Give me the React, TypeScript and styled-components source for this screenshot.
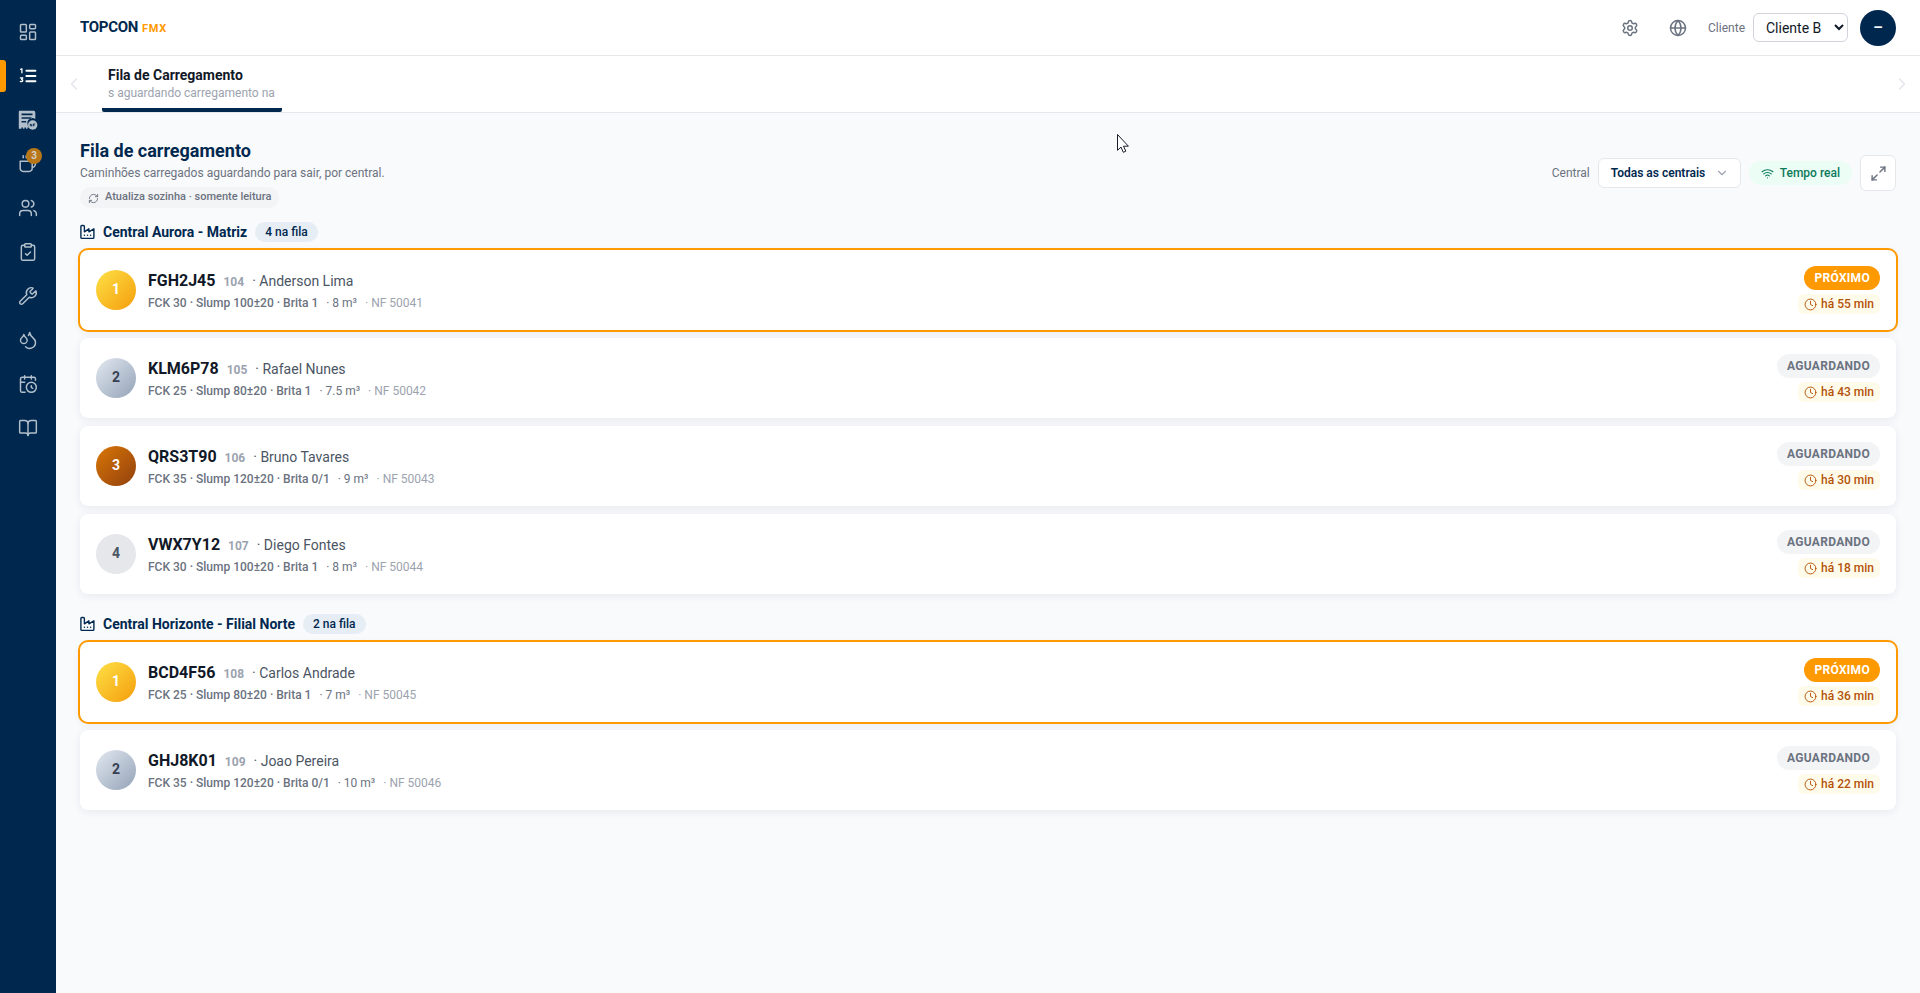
import React from 'react';

import styled, { createGlobalStyle, css } from 'styled-components';
import {
  BookOpen,
  CalendarClock,
  ChevronDown,
  ChevronLeft,
  ChevronRight,
  ClipboardCheck,
  Clock,
  Droplets,
  Globe,
  LayoutDashboard,
  Maximize2,
  RefreshCw,
  Settings,
  Users,
  Wifi,
  Wrench,
} from 'lucide-react';

const NAVY = '#00284f';
const ORANGE = '#ff9900';

const GlobalStyle = createGlobalStyle`
  * {
    box-sizing: border-box;
  }

  body {
    margin: 0;
    background: #f9fafc;
    color: #111827;
    font-family: Roboto, sans-serif;
    font-size: 14px;
  }

  button,
  select {
    font-family: inherit;
  }
`;

const Shell = styled.div`
  display: flex;
  height: 100vh;
  overflow: hidden;
`;

const Sidebar = styled.nav`
  display: flex;
  flex-direction: column;
  flex: 0 0 56px;
  padding-top: 10px;
  background: ${NAVY};
`;

const NavItem = styled.a<{ $active?: boolean }>`
  position: relative;
  display: flex;
  align-items: center;
  justify-content: center;
  height: 44px;
  color: ${({ $active }) => ($active ? '#ffffff' : '#b3bfca')};

  ${({ $active }) =>
    $active &&
    css`
      &::before {
        content: '';
        position: absolute;
        left: 0;
        top: 6px;
        width: 6px;
        height: 32px;
        border-radius: 0 3px 3px 0;
        background: ${ORANGE};
      }
    `}
`;

const NavBadge = styled.span`
  position: absolute;
  left: 26px;
  top: 6px;
  width: 16px;
  height: 16px;
  border-radius: 50%;
  background: #b87718;
  color: #d5d0c8;
  font-size: 10px;
  font-weight: 700;
  line-height: 16px;
  text-align: center;
`;

const Main = styled.div`
  flex: 1;
  min-width: 0;
`;

const TopBar = styled.header`
  display: flex;
  align-items: center;
  height: 56px;
  padding: 0 24px;
  border-bottom: 1px solid #e5e7eb;
  background: #ffffff;
`;

const Brand = styled.div`
  display: flex;
  align-items: baseline;
  gap: 4px;
  margin-right: auto;
  color: ${NAVY};
  font-size: 15px;
  font-weight: 700;
  letter-spacing: -0.3px;
  line-height: 20px;

  small {
    color: ${ORANGE};
    font-size: 11px;
    letter-spacing: 0.7px;
  }
`;

const TopIcon = styled.button`
  display: flex;
  align-items: center;
  justify-content: center;
  width: 48px;
  height: 36px;
  padding: 0;
  border: 0;
  background: none;
  color: #6b7280;
`;

const ClientLabel = styled.label`
  display: flex;
  align-items: center;
  gap: 8px;
  margin: 0 12px 0 6px;
  color: #6b7280;
  font-size: 12px;
`;

const ClientSelect = styled.select`
  width: 95px;
  height: 29px;
  padding: 0 0 0 8px;
  border: 1px solid #d1d5db;
  border-radius: 6px;
  background: #ffffff;
  color: #111827;
  font-size: 14px;
`;

const Avatar = styled.div`
  display: flex;
  align-items: center;
  justify-content: center;
  width: 36px;
  height: 36px;
  padding-bottom: 2px;
  border-radius: 50%;
  background: ${NAVY};
  color: #ffffff;
  font-size: 15px;
  font-weight: 700;
  line-height: 18px;
`;

const TabBar = styled.div`
  display: flex;
  align-items: center;
  height: 57px;
  padding: 0 8px;
  border-bottom: 1px solid #e5e7eb;
  background: #ffffff;
  color: #e5e7eb;
`;

const Tab = styled.div`
  align-self: stretch;
  width: 180px;
  margin: 0 auto 0 18px;
  padding: 10px 6px 0;
  border-bottom: 4px solid ${NAVY};
  border-radius: 0 0 2px 2px;
  color: #111827;
  font-size: 14px;
  font-weight: 700;
  line-height: 18px;
  white-space: nowrap;

  small {
    display: block;
    overflow: hidden;
    margin-top: 1px;
    color: #9ca3af;
    font-size: 12px;
    font-weight: 400;
    line-height: 16px;
  }
`;

const Content = styled.main`
  padding: 24px;
`;

const PageHeader = styled.div`
  display: flex;
  align-items: center;
  justify-content: space-between;
  height: 72px;
`;

const Heading = styled.div`
  display: flex;
  flex-direction: column;
  align-items: flex-start;
  align-self: flex-start;
`;

const PageTitle = styled.h1`
  margin: 0;
  color: ${NAVY};
  font-size: 18px;
  font-weight: 700;
  line-height: 28px;
`;

const Subtitle = styled.p`
  margin: 0;
  color: #6b7280;
  font-size: 12px;
  line-height: 16px;
`;

const ReadOnlyNote = styled.span`
  display: inline-flex;
  align-items: center;
  gap: 6px;
  height: 21px;
  margin-top: 6px;
  padding: 0 8px 2px;
  border-radius: 11px;
  background: #f3f4f6;
  color: #6b7280;
  font-size: 11px;
  font-weight: 500;
  line-height: 16px;

  svg {
    margin-top: 3px;
  }
`;

const Controls = styled.div`
  display: flex;
  align-items: center;
  gap: 8px;
  color: #6b7280;
  font-size: 12px;
`;

const PlantSelect = styled.button`
  display: flex;
  align-items: center;
  justify-content: space-between;
  width: 143px;
  height: 30px;
  padding: 0 11px 0 12px;
  border: 1px solid #e5e7eb;
  border-radius: 6px;
  background: #ffffff;
  color: ${NAVY};
  font-size: 12px;
  font-weight: 600;

  svg {
    color: #9ca3af;
  }
`;

const LivePill = styled.span`
  display: flex;
  align-items: center;
  gap: 6px;
  height: 24px;
  padding: 0 12px;
  border-radius: 12px;
  background: #ecfdf5;
  color: #0c7a5c;
  font-weight: 500;
`;

const ExpandButton = styled.button`
  display: flex;
  align-items: center;
  justify-content: center;
  width: 36px;
  height: 36px;
  padding: 0;
  border: 1px solid #e5e7eb;
  border-radius: 6px;
  background: #ffffff;
  color: #6b7280;
`;

const Plant = styled.section`
  margin-top: 11px;

  & + & {
    margin-top: 18px;
  }
`;

const PlantHeading = styled.h2`
  display: flex;
  align-items: center;
  height: 24px;
  margin: 0 0 6px;
  color: ${NAVY};
  font-size: 14px;
  font-weight: 700;
  line-height: 20px;

  svg {
    margin-right: 8px;
  }
`;

const CountPill = styled.span`
  height: 20px;
  margin-left: 8px;
  padding: 0 10px;
  border-radius: 10px;
  background: #e6edf5;
  font-size: 12px;
  font-weight: 500;
`;

const Queue = styled.div`
  display: grid;
  gap: 8px;
`;

const QueueCard = styled.article<{ $next?: boolean }>`
  display: flex;
  align-items: center;
  gap: 12px;
  height: 80px;
  padding: 0 16px;
  border-radius: 8px;
  background: #ffffff;
  box-shadow: ${({ $next }) => $next && `0 0 0 2px ${ORANGE}, `}
    0 2px 8px rgba(0, 40, 79, 0.08);
`;

const rankStyles: Record<number, ReturnType<typeof css>> = {
  1: css`
    background: linear-gradient(135deg, #fde047, #f59e0b);
    color: #ffffff;
  `,
  2: css`
    background: linear-gradient(135deg, #e2e8f0, #94a3b8);
    color: #374151;
  `,
  3: css`
    background: linear-gradient(135deg, #d97706, #92400e);
    color: #ffffff;
  `,
};

const Rank = styled.div<{ $rank: number }>`
  display: flex;
  align-items: center;
  justify-content: center;
  width: 40px;
  height: 40px;
  padding-bottom: 2px;
  border-radius: 50%;
  background: #e5e7eb;
  color: #4b5563;
  font-size: 14px;
  font-weight: 700;
  ${({ $rank }) => rankStyles[$rank]}
`;

const Details = styled.div`
  flex: 1;
`;

const TruckLine = styled.div`
  display: flex;
  align-items: baseline;
  gap: 8px;
  padding-top: 2px;
  color: #4b5563;
  font-size: 14px;
  line-height: 22px;
`;

const Plate = styled.strong`
  color: #111827;
  font-size: 16px;
  font-weight: 700;
`;

const Fleet = styled.span`
  color: #9ca3af;
  font-size: 12px;
  font-weight: 700;
`;

const MixLine = styled.div`
  display: flex;
  gap: 8px;
  color: #6b7280;
  font-size: 12px;
  line-height: 20px;
`;

const Mix = styled.span`
  font-weight: 500;
`;

const Invoice = styled.span`
  color: #9ca3af;
`;

const StatusColumn = styled.div`
  display: flex;
  flex-direction: column;
  align-items: flex-end;
  gap: 4px;
`;

const Status = styled.span<{ $next?: boolean }>`
  height: 24px;
  padding: 0 10px;
  border-radius: 12px;
  background: ${({ $next }) => ($next ? ORANGE : '#f3f4f6')};
  color: ${({ $next }) => ($next ? '#ffffff' : '#6b7280')};
  font-size: 12px;
  font-weight: 700;
  letter-spacing: 0.3px;
  line-height: 24px;
`;

const Waiting = styled.span`
  display: flex;
  align-items: center;
  gap: 4px;
  height: 20px;
  padding: 0 6px;
  border-radius: 6px;
  background: #fffbeb;
  color: #b45309;
  font-size: 12px;
  font-weight: 500;
`;

const Pointer = styled.svg`
  position: absolute;
  left: 1116px;
  top: 133px;
`;

const stroke = {
  fill: 'none',
  stroke: 'currentColor',
  strokeLinecap: 'round' as const,
  strokeLinejoin: 'round' as const,
};

function QueueIcon() {
  return (
    <svg width="20" height="20" viewBox="0 0 20 20" {...stroke}>
      <path d="M8.4 4.7h9M8.4 10h9M8.4 15.3h9" strokeWidth="2" />
      <path
        d="M2.6 3.3l1.3-.5v4M2.4 11.9h2.4l-1.2 1.6c1.8.1 1.5 2.6-1.2 2"
        strokeWidth="1.3"
      />
    </svg>
  );
}

function InvoiceIcon() {
  return (
    <svg width="20" height="20" viewBox="0 0 20 20" fill="currentColor">
      <path
        fillRule="evenodd"
        d="M1.5.8h14.2a1.6 1.6 0 0 1 1.6 1.6v6.7a5 5 0 0 0-7.7 5.4c.2 1.4.8 2.3 1.5 3H9.5v1.3H8v-1.3H6.5v1.3H5v-1.3H3.5v1.3H.8V1.7a.9.9 0 0 1 .7-.9ZM3.5 3.6v1.6h11V3.6Zm0 3.7v1.5h10V7.3Zm0 3.7v1.4h4.7V11Z"
      />
      <circle cx="14.7" cy="15" r="4.7" />
      <path
        d="M12.3 16.3v-2.4l1.5 2.4v-2.4M15.5 16.3v-2.4h1.7M15.5 15.1h1.4"
        stroke={NAVY}
        strokeWidth="0.8"
        fill="none"
      />
    </svg>
  );
}

function MugIcon() {
  return (
    <svg width="20" height="20" viewBox="0 0 20 20" {...stroke} strokeWidth="1.5">
      <path d="M2.2 7.2h12v7.2a3 3 0 0 1-3 3h-6a3 3 0 0 1-3-3ZM14.2 13.4c2 0 3.2-1.6 3.4-4.6M5.2 1.8v2M8.2 1.8v2" />
    </svg>
  );
}

function FactoryIcon() {
  return (
    <svg width="15" height="16" viewBox="0 0 15 16" {...stroke} strokeWidth="1.4">
      <path d="M.9 13.4V2.5c0-.6.4-1 1-1h1.5c.6 0 1 .4 1 1v5.3l4.5-3v3l5-3v8.6c0 .6-.4 1-1 1h-11c-.6 0-1-.4-1-1ZM4.4 11.3h.1M7.5 11.3h.1M10.6 11.3h.1" />
    </svg>
  );
}

const plants = [
  {
    name: 'Central Aurora - Matriz',
    trucks: [
      ['FGH2J45', '104', 'Anderson Lima', 'FCK 30 · Slump 100±20 · Brita 1', '8', '50041', '55'],
      ['KLM6P78', '105', 'Rafael Nunes', 'FCK 25 · Slump 80±20 · Brita 1', '7.5', '50042', '43'],
      ['QRS3T90', '106', 'Bruno Tavares', 'FCK 35 · Slump 120±20 · Brita 0/1', '9', '50043', '30'],
      ['VWX7Y12', '107', 'Diego Fontes', 'FCK 30 · Slump 100±20 · Brita 1', '8', '50044', '18'],
    ],
  },
  {
    name: 'Central Horizonte - Filial Norte',
    trucks: [
      ['BCD4F56', '108', 'Carlos Andrade', 'FCK 25 · Slump 80±20 · Brita 1', '7', '50045', '36'],
      ['GHJ8K01', '109', 'Joao Pereira', 'FCK 35 · Slump 120±20 · Brita 0/1', '10', '50046', '22'],
    ],
  },
];

function TruckCard({ truck, rank }: { truck: string[]; rank: number }) {
  const [plate, fleet, driver, mix, volume, invoice, minutes] = truck;
  const next = rank === 1;

  return (
    <QueueCard $next={next}>
      <Rank $rank={rank}>{rank}</Rank>
      <Details>
        <TruckLine>
          <Plate>{plate}</Plate>
          <Fleet>{fleet}</Fleet>
          <span>· {driver}</span>
        </TruckLine>
        <MixLine>
          <Mix>{mix}</Mix>
          <span>· {volume} m³</span>
          <Invoice>· NF {invoice}</Invoice>
        </MixLine>
      </Details>
      <StatusColumn>
        <Status $next={next}>{next ? 'PRÓXIMO' : 'AGUARDANDO'}</Status>
        <Waiting>
          <Clock size={13} strokeWidth={1.75} />
          há {minutes} min
        </Waiting>
      </StatusColumn>
    </QueueCard>
  );
}

export function App() {
  return (
    <Shell>
      <GlobalStyle />
      <Sidebar>
        <NavItem>
          <LayoutDashboard size={20} strokeWidth={1.75} />
        </NavItem>
        <NavItem $active>
          <QueueIcon />
        </NavItem>
        <NavItem>
          <InvoiceIcon />
        </NavItem>
        <NavItem>
          <MugIcon />
          <NavBadge>3</NavBadge>
        </NavItem>
        <NavItem>
          <Users size={20} strokeWidth={1.75} />
        </NavItem>
        <NavItem>
          <ClipboardCheck size={20} strokeWidth={1.75} />
        </NavItem>
        <NavItem>
          <Wrench size={20} strokeWidth={1.75} />
        </NavItem>
        <NavItem>
          <Droplets size={20} strokeWidth={1.75} />
        </NavItem>
        <NavItem>
          <CalendarClock size={20} strokeWidth={1.75} />
        </NavItem>
        <NavItem>
          <BookOpen size={20} strokeWidth={1.75} />
        </NavItem>
      </Sidebar>
      <Main>
        <TopBar>
          <Brand>
            TOPCON <small>FMX</small>
          </Brand>
          <TopIcon>
            <Settings size={18} />
          </TopIcon>
          <TopIcon>
            <Globe size={18} />
          </TopIcon>
          <ClientLabel>
            Cliente
            <ClientSelect defaultValue="b">
              <option value="b">Cliente B</option>
            </ClientSelect>
          </ClientLabel>
          <Avatar>–</Avatar>
        </TopBar>
        <TabBar>
          <ChevronLeft size={20} strokeWidth={1.75} />
          <Tab>
            Fila de Carregamento
            <small>s aguardando carregamento na</small>
          </Tab>
          <ChevronRight size={20} strokeWidth={1.75} />
        </TabBar>
        <Content>
          <PageHeader>
            <Heading>
              <PageTitle>Fila de carregamento</PageTitle>
              <Subtitle>
                Caminhões carregados aguardando para sair, por central.
              </Subtitle>
              <ReadOnlyNote>
                <RefreshCw size={11} />
                Atualiza sozinha · somente leitura
              </ReadOnlyNote>
            </Heading>
            <Controls>
              Central
              <PlantSelect>
                Todas as centrais
                <ChevronDown size={14} />
              </PlantSelect>
              <LivePill>
                <Wifi size={13} />
                Tempo real
              </LivePill>
              <ExpandButton>
                <Maximize2 size={17} />
              </ExpandButton>
            </Controls>
          </PageHeader>
          {plants.map((plant) => (
            <Plant key={plant.name}>
              <PlantHeading>
                <FactoryIcon />
                {plant.name}
                <CountPill>{plant.trucks.length} na fila</CountPill>
              </PlantHeading>
              <Queue>
                {plant.trucks.map((truck, index) => (
                  <TruckCard key={truck[0]} truck={truck} rank={index + 1} />
                ))}
              </Queue>
            </Plant>
          ))}
        </Content>
      </Main>
      <Pointer width="14" height="22" viewBox="0 0 14 22">
        <path
          d="M1.5 1.5v15.8l3.5-3.2 2.3 5.2 2.5-1.1-2.3-5h4.9Z"
          fill="#ffffff"
          stroke="#1b1b2b"
        />
      </Pointer>
    </Shell>
  );
}

export default App;
